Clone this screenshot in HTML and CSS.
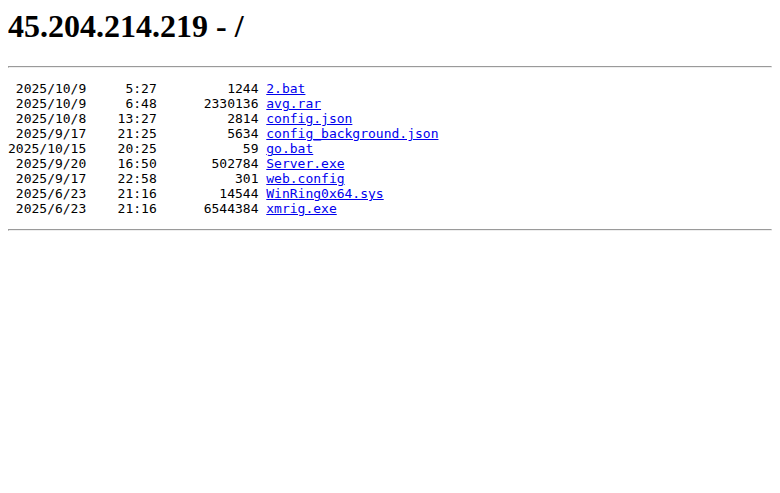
FILE: index.html
```html
<!DOCTYPE html>
<html>
<head>
  <meta charset="UTF-8">
  <title>45.204.214.219 - /</title>
  <link rel="stylesheet" href="styles.css">
</head>
<body>
<h1 class="title">45.204.214.219 - /</h1><hr class="rule">

<pre class="listing"> 2025/10/9     5:27         1244 <a href="/2.bat">2.bat</a>
 2025/10/9     6:48      2330136 <a href="/avg.rar">avg.rar</a>
 2025/10/8    13:27         2814 <a href="/config.json">config.json</a>
 2025/9/17    21:25         5634 <a href="/config_background.json">config_background.json</a>
2025/10/15    20:25           59 <a href="/go.bat">go.bat</a>
 2025/9/20    16:50       502784 <a href="/Server.exe">Server.exe</a>
 2025/9/17    22:58          301 <a href="/web.config">web.config</a>
 2025/6/23    21:16        14544 <a href="/WinRing0x64.sys">WinRing0x64.sys</a>
 2025/6/23    21:16      6544384 <a href="/xmrig.exe">xmrig.exe</a>
</pre><hr class="rule">
</body>
</html>
```

FILE: styles.css
```css
body {
  margin: 8px;
  font-family: 'Liberation Serif', serif;
  background: #fff;
  color: #000;
}
.title {
  margin: 0 0 21.44px;
  font-size: 32px;
  font-weight: bold;
  line-height: 37px;
}
.rule {
  margin: 8px 0;
}
.listing {
  margin: 13px 0;
  font-family: 'DejaVu Sans Mono', monospace;
  font-size: 13px;
}
.listing a {
  color: #0000ee;
}
```
